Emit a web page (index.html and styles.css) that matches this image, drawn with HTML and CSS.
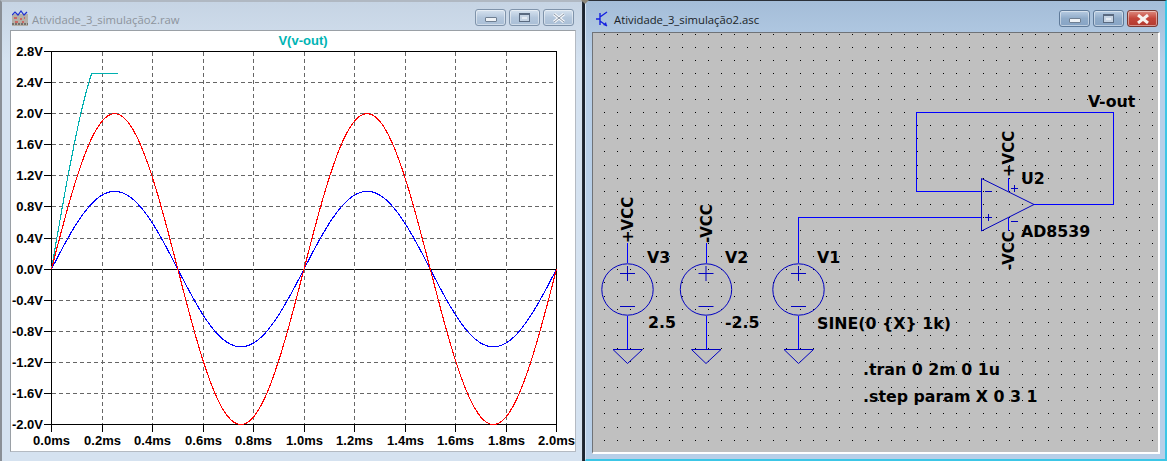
FILE: index.html
```html
<!DOCTYPE html>
<html lang="en">
<head>
    <meta charset="UTF-8">
    <title>LTspice - Atividade_3_simulação2</title>
    <link rel="stylesheet" href="styles.css">
</head>
<body>
    <div class="desktop">
        <!-- waveform window (inactive) -->
        <section class="window window-plot">
            <header class="title-bar">
                <svg class="app-icon" viewBox="0 0 16 16" width="16" height="16">
                    <rect x="0" y="4" width="16" height="12" fill="#b4b0a8"/>
                    <path d="M0 5 L3 2 L6 5 L9 1 L12 5 L15 2" fill="none" stroke="#1f2fd0" stroke-width="1.2"/>
                    <path d="M2 8 H5 M8 9 H10 M12 8 H13 M3 12 H6 M10 12 H12" stroke="#e02020" stroke-width="1"/>
                    <path d="M0 14 H16" stroke="#333" stroke-width="1" stroke-dasharray="2 1"/>
                </svg>
                <span class="title-text">Atividade_3_simulação2.raw</span>
                <div class="controls">
                    <span class="ctl"><i class="glyph-min"></i></span>
                    <span class="ctl"><i class="glyph-max"></i></span>
                    <span class="ctl ctl-close">
                        <svg viewBox="0 0 14 10" width="14" height="10"><path d="M2 1 L12 9 M12 1 L2 9" stroke="#f4f6f9" stroke-width="3"/><path d="M2 1 L12 9 M12 1 L2 9" stroke="#8b97a6" stroke-width="1" /></svg>
                    </span>
                </div>
            </header>
            <div class="client client-plot">
                <svg id="plot" class="canvas" viewBox="11 31 564 420"></svg>
            </div>
        </section>

        <!-- schematic window (active) -->
        <section class="window window-schematic">
            <i class="corner-mark"></i>
            <header class="title-bar">
                <svg class="app-icon" viewBox="0 0 16 16" width="16" height="16">
                    <path d="M1 8 H5 M5 2 V14 M12 1 L5 6 M5 10 L12 15" fill="none" stroke="#1420e0" stroke-width="1.4"/>
                    <path d="M12 15 L8 14 L11 11 Z" fill="#1420e0"/>
                </svg>
                <span class="title-text">Atividade_3_simulação2.asc</span>
                <div class="controls">
                    <span class="ctl"><i class="glyph-min"></i></span>
                    <span class="ctl"><i class="glyph-max"></i></span>
                    <span class="ctl ctl-close">
                        <svg viewBox="0 0 14 10" width="14" height="10"><path d="M2 1 L12 9 M12 1 L2 9" stroke="#f7f2ef" stroke-width="3"/></svg>
                    </span>
                </div>
            </header>
            <div class="client client-schematic">
                <svg class="canvas" viewBox="593 33 565 419">
                    <defs>
                        <g id="source">
                            <circle cx="0" cy="0" r="25.7" class="symbol"/>
                            <path d="M-7.5 -16 H7.5 M0 -23.5 V-8.5 M-7.5 17 H7.5" class="symbol"/>
                            <path d="M0 26 V60" class="wire"/>
                            <path d="M-14.5 60 H15 L0 74 Z" class="symbol"/>
                        </g>
                    </defs>
                    <path id="dots" class="dots"/>

                    <!-- feedback and input wires -->
                    <path d="M1034 204.5 H1113.5 V112.5 H916.5 V191.5 H982" class="wire"/>
                    <path d="M982 217.5 H798.5 V263" class="wire"/>
                    <path d="M627.5 243 V263 M706.5 243 V263" class="wire"/>
                    <path d="M1008.5 178 V191 M1008.5 218 V231" class="wire"/>

                    <!-- op amp -->
                    <path d="M981.5 178.5 V231 L1034 204.5 Z" class="symbol"/>
                    <path d="M985 191.5 H992 M985 217.5 H992 M988.5 214 V221 M1011 188.5 H1018 M1014.5 185 V192 M1011 221.5 H1018" class="symbol"/>

                    <use href="#source" x="627.5" y="289.5"/>
                    <use href="#source" x="706" y="289.5"/>
                    <use href="#source" x="798.5" y="289.5"/>

                    <text class="label" x="1088" y="107">V-out</text>
                    <text class="label" x="1021" y="184">U2</text>
                    <text class="label" x="1021" y="237">AD8539</text>
                    <text class="label label-vert" transform="translate(1014 177) rotate(-90)">+VCC</text>
                    <text class="label label-vert" transform="translate(1014 270) rotate(-90)">-VCC</text>
                    <text class="label label-vert" transform="translate(633 243) rotate(-90)">+VCC</text>
                    <text class="label label-vert" transform="translate(712 243) rotate(-90)">-VCC</text>
                    <text class="label" x="647" y="263">V3</text>
                    <text class="label" x="648" y="328">2.5</text>
                    <text class="label" x="725" y="263">V2</text>
                    <text class="label" x="725" y="328">-2.5</text>
                    <text class="label" x="817" y="263">V1</text>
                    <text class="label" x="817" y="329">SINE(0 {X} 1k)</text>
                    <text class="label" x="863" y="375">.tran 0 2m 0 1u</text>
                    <text class="label" x="863" y="402">.step param X 0 3 1</text>
                </svg>
            </div>
        </section>
    </div>

    <script src="plot.js"></script>
</body>
</html>
```

FILE: styles.css
```css
html, body {
    margin: 0;
    padding: 0;
    background: #1b2430;
}

.desktop {
    display: flex;
    justify-content: space-between;
    width: 1167px;
    height: 461px;
    overflow: hidden;
}

.window {
    position: relative;
    display: flex;
    flex-direction: column;
    box-sizing: border-box;
}

.window-plot {
    width: 583px;
    height: 461px;
    padding: 0 6px 9px 8px;
    background: linear-gradient(to bottom, #c6d4e4, #d5e2f0 60px);
    border-left: 2px solid #8a8f96;
    border-right: 1px solid #2a3038;
    border-top: 2px solid #b0b8c2;
}

.window-schematic {
    width: 582px;
    height: 461px;
    padding: 0 5px 5px 6px;
    background: linear-gradient(to bottom, #a4bdd8, #b8cfe8 60px);
    border-top: 1px solid #2a3038;
    border-left: 1px solid #d8e6f4;
    border-right: 2px solid #3cc6e6;
    border-bottom: 2px solid #3cc6e6;
}

.corner-mark {
    position: absolute;
    top: -1px;
    left: -5px;
    width: 0;
    height: 0;
    border-left: 4px solid transparent;
    border-right: 4px solid transparent;
    border-top: 4px solid #8c8678;
}

.title-bar {
    display: flex;
    align-items: flex-start;
    flex: none;
    height: 28px;
    font-family: "Open Sans", "Noto Sans", sans-serif;
    font-size: 11.3px;
}

.window-schematic .title-bar {
    height: 31px;
}

.app-icon {
    flex: none;
    margin: 8px 4px 0 2px;
}

.window-schematic .app-icon {
    margin: 10px 3px 0 3px;
}

.title-text {
    margin-top: 10px;
    line-height: 16px;
    color: #8d949c;
}

.window-schematic .title-text {
    margin-top: 11px;
    color: #1a1f26;
}

.controls {
    display: flex;
    gap: 3px;
    margin-left: auto;
    margin-top: 7px;
    margin-right: 2px;
}

.window-schematic .controls {
    margin-top: 9px;
}

.ctl {
    display: flex;
    align-items: center;
    justify-content: center;
    box-sizing: border-box;
    width: 31px;
    height: 17px;
    border: 1px solid #7f93aa;
    border-radius: 3px;
    background: linear-gradient(to bottom, #d6e2ef, #b4c7dc 50%, #a9bed6);
    box-shadow: inset 0 0 0 1px rgba(255, 255, 255, 0.45);
}

.window-schematic .ctl {
    border-color: #5f7a99;
    background: linear-gradient(to bottom, #b8cce2, #8fabc9 50%, #86a3c4);
}

.window-schematic .ctl-close {
    border-color: #7a3a34;
    background: linear-gradient(to bottom, #dd8b80, #c4453a 50%, #b23a30);
}

.glyph-min {
    display: block;
    width: 10px;
    height: 3px;
    margin-top: 3px;
    background: #eef2f6;
    border: 1px solid #6f7f92;
    border-radius: 1px;
}

.glyph-max {
    display: block;
    box-sizing: border-box;
    width: 11px;
    height: 9px;
    background: #e4ebf3;
    border: 2px solid #5a6a80;
    border-width: 2px 1px 1px;
    box-shadow: inset 0 0 0 2px #c6d4e4;
}

.client {
    flex: 1;
    min-height: 0;
    box-sizing: border-box;
}

.client-plot {
    background: #fff;
    border-top: 1px solid #9aa0a6;
    border-left: 1px solid #9aa0a6;
    border-right: 1px solid #b4bac2;
    border-bottom: 1px solid #b4bac2;
}

.client-schematic {
    background: #c0c0c0;
    border-top: 1px solid #6f7378;
    border-left: 1px solid #6f7378;
    border-right: 2px solid #fff;
    border-bottom: 2px solid #fff;
}

.canvas {
    display: block;
    width: 100%;
    height: 100%;
}

.dots {
    fill: #000;
    shape-rendering: crispEdges;
}

.wire {
    fill: none;
    stroke: #0000ff;
    stroke-width: 1;
    shape-rendering: crispEdges;
}

.symbol {
    fill: none;
    stroke: #0000c0;
    stroke-width: 1;
}

.label {
    font-family: "DejaVu Sans", sans-serif;
    font-size: 15.8px;
    font-weight: bold;
    fill: #000;
}

.label-vert {
    font-size: 15px;
}

.axis-label {
    font-family: "Liberation Sans", Arial, sans-serif;
    font-size: 13px;
    font-weight: bold;
    fill: #000;
}

.trace-title {
    font-family: "Liberation Sans", Arial, sans-serif;
    font-size: 13px;
    font-weight: bold;
    fill: #00b4b4;
    text-anchor: middle;
}

.grid-line {
    stroke: #666;
    stroke-width: 1;
    stroke-dasharray: 4 3;
    shape-rendering: crispEdges;
}

.axis-line {
    stroke: #000;
    stroke-width: 1;
    shape-rendering: crispEdges;
}

.trace {
    fill: none;
    stroke-width: 1.1;
    shape-rendering: crispEdges;
}
```

FILE: plot.js
```js
const SVG_NS = 'http://www.w3.org/2000/svg';
const plot = document.getElementById('plot');

const left = 51.5, right = 556.5, top_ = 51.5, bottom = 424.5;

const xPos = ms => left + (right - left) * ms / 2;
const yPos = v => top_ + (bottom - top_) * (2.8 - v) / 4.8;

function add(tag, attrs, text) {
    const el = document.createElementNS(SVG_NS, tag);
    Object.keys(attrs).forEach(k => el.setAttribute(k, attrs[k]));
    if (text) el.textContent = text;
    plot.appendChild(el);
    return el;
}

function line(x1, y1, x2, y2, cls) {
    add('line', { x1, y1, x2, y2, class: cls });
}

// grid and y ticks, 2.8V down to -2.0V
for (let i = 0; i <= 12; i++) {
    const v = 2.8 - i * 0.4;
    const y = Math.floor(yPos(v)) + 0.5;
    if (i > 0 && i < 12 && i !== 7) line(left, y, right, y, 'grid-line');
    if (i === 7) line(left, y, right, y, 'axis-line');
    line(44, y, left, y, 'axis-line');
    const label = (Math.abs(v) < 0.01 ? '0.0' : v.toFixed(1)) + 'V';
    add('text', { x: 43, y: y + 4.5, class: 'axis-label', 'text-anchor': 'end' }, label);
}

// grid and x ticks, 0.0ms to 2.0ms
for (let i = 0; i <= 10; i++) {
    const ms = i * 0.2;
    const x = Math.floor(xPos(ms)) + 0.5;
    if (i > 0 && i < 10) line(x, top_, x, bottom, 'grid-line');
    line(x, bottom, x, bottom + 7, 'axis-line');
    add('text', { x, y: 445, class: 'axis-label', 'text-anchor': 'middle' }, ms.toFixed(1) + 'ms');
}

add('rect', { x: left, y: top_, width: right - left, height: bottom - top_, fill: 'none', class: 'axis-line' });

function trace(amp, endMs, color) {
    const points = [];
    for (let ms = 0; ms <= endMs; ms += 0.005) {
        const v = Math.min(2.52, amp * Math.sin(2 * Math.PI * ms));
        points.push(xPos(ms).toFixed(1) + ',' + yPos(v).toFixed(1));
    }
    add('polyline', { points: points.join(' '), class: 'trace', stroke: color });
}

trace(3, 0.268, '#00b0b0');
trace(1, 2.001, '#0000ff');
trace(2, 2.001, '#ff0000');

add('text', { x: 303, y: 45, class: 'trace-title' }, 'V(v-out)');

// schematic background dots
let dots = '';
for (let r = 0; r < 32; r++) {
    for (let c = -1; c < 43; c++) {
        dots += 'M' + Math.floor(604 + c * 13.07) + ' ' + Math.floor(34 + r * 13.1) + 'h1v1h-1z';
    }
}
document.getElementById('dots').setAttribute('d', dots);
```
